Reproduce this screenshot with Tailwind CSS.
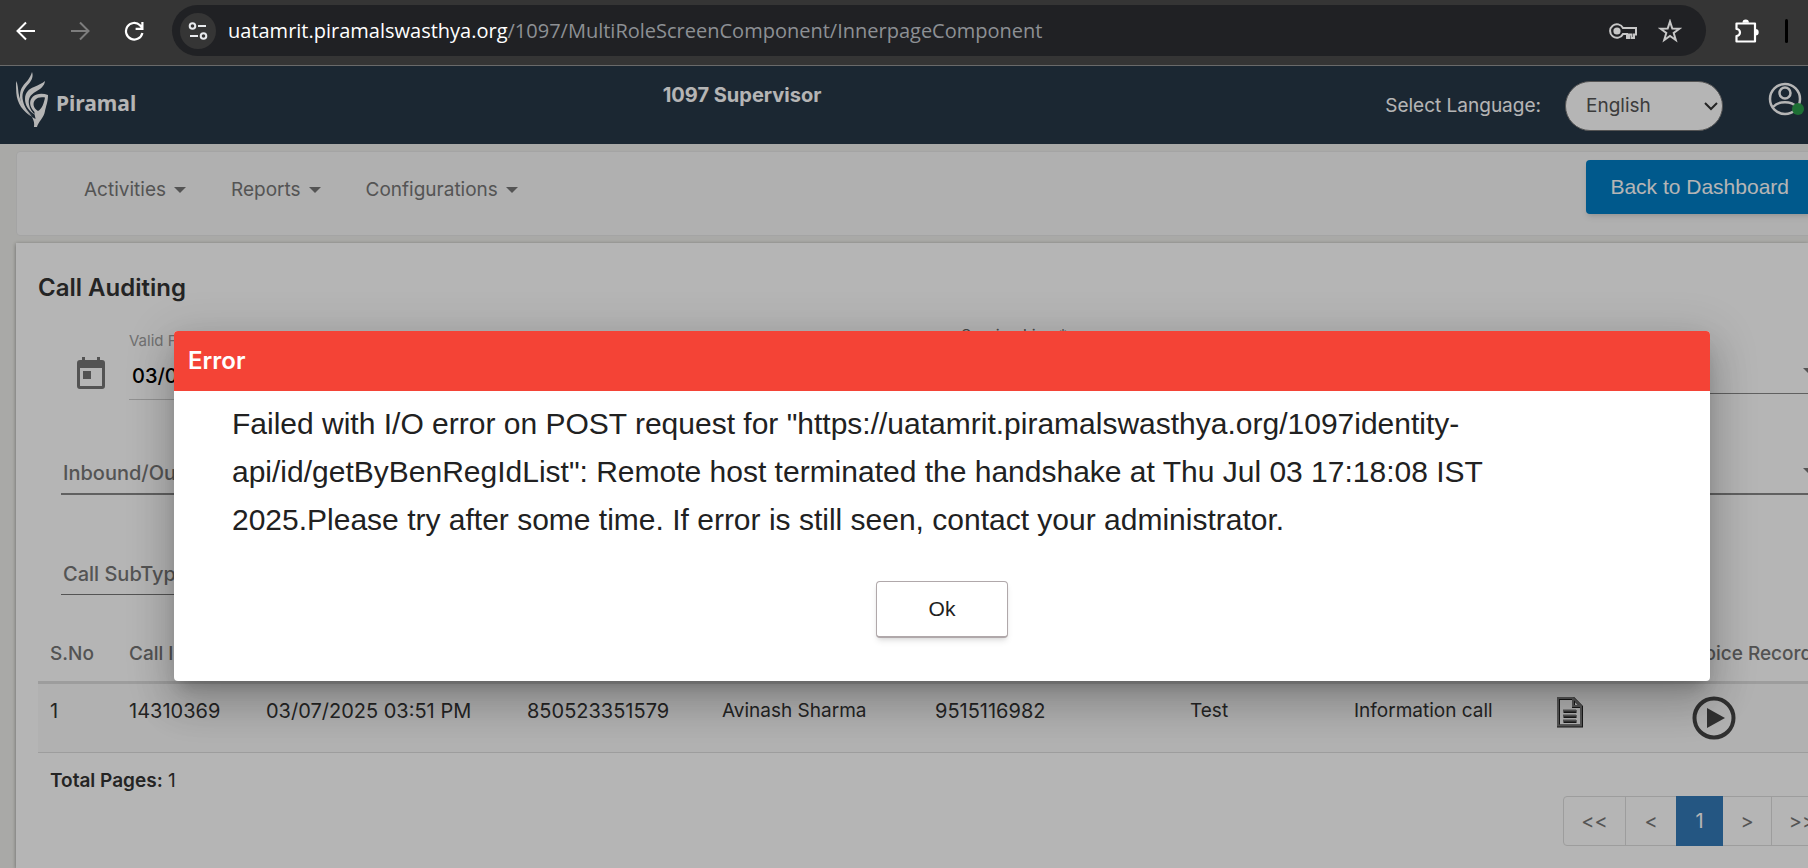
<!DOCTYPE html>
<html lang="en">
<head>
  <meta charset="UTF-8">
  <title>1097 Supervisor</title>
  <script src="https://cdn.jsdelivr.net/npm/@tailwindcss/browser@4"></script>
</head>
<body class="min-h-screen flex flex-col overflow-hidden bg-[#efefeb] font-['Inter',sans-serif] text-[19px] text-[#333]">

  <!-- browser toolbar -->
  <div class="flex items-center h-[66px] pb-1 pl-4 bg-[#353535] border-b border-[#6a6a6a] text-white">
    <button aria-label="Back" class="w-5 mr-[34px]">
      <svg class="w-5 h-5" viewBox="0 0 20 20" fill="none" stroke="#fff" stroke-width="2"><path d="M19 10H2M10 1.5 1.5 10l8.500 8.500"/></svg>
    </button>
    <button aria-label="Forward" class="w-5 mr-[34px]">
      <svg class="w-5 h-5" viewBox="0 0 20 20" fill="none" stroke="#7d7d7d" stroke-width="2"><path d="M1 10h17M10 1.500 18.500 10 10 18.500"/></svg>
    </button>
    <button aria-label="Reload" class="w-5 mr-7">
      <svg class="w-5 h-5" viewBox="0 0 20 20" fill="none" stroke="#fff" stroke-width="2.200"><path d="M18.400 12A8.300 8.300 0 1 1 16 4.200L18 6.500M18.400 1v6.800h-6.800"/></svg>
    </button>
    <div class="flex flex-1 items-center h-[51px] pl-2 pr-6 rounded-full bg-[#202124]">
      <button aria-label="Site information" class="flex items-center justify-center w-9 h-9 mr-3 rounded-full bg-[#353535]">
        <svg class="w-5 h-5" viewBox="0 0 20 20" fill="none" stroke="#e8eaed" stroke-width="2"><circle cx="4.500" cy="5" r="2.800"/><path d="M10 5h8M2 15h8"/><circle cx="15.500" cy="15" r="2.800"/></svg>
      </button>
      <p class="flex-1 font-['Open_Sans',sans-serif] text-xl text-[#8d9094]"><span class="text-white">uatamrit.piramalswasthya.org</span>/1097/MultiRoleScreenComponent/InnerpageComponent</p>
      <button aria-label="Passwords" class="mr-[21px]">
        <svg class="w-7 h-5" viewBox="0 0 28 20" fill="none" stroke="#c7c7c7" stroke-width="2"><path d="M14 7h13v6.500h-2V17h-2.500v-3.500H20V17h-2v-4h-4A6.800 6.800 0 1 1 14 7z"/><circle cx="8" cy="10" r="2.600" fill="#c7c7c7"/></svg>
      </button>
      <button aria-label="Bookmark">
        <svg class="w-6 h-6" viewBox="0 0 24 24" fill="none" stroke="#c7c7c7" stroke-width="2"><path d="m12 2.500 2.300 7 7.200.200-5.800 4.300 2.100 7L12 17l-5.800 4 2.100-7-5.800-4.300 7.200-.200z"/></svg>
      </button>
    </div>
    <button aria-label="Extensions" class="ml-[29px] mr-[26px]">
      <svg class="w-6 h-6" viewBox="0 0 24 24" fill="none" stroke="#fff" stroke-width="2.200" stroke-linejoin="round"><path d="M1.500 4.500h18.500V22.500H1.500v-5.500a3.500 3.500 0 0 0 0-7z"/><path d="M7.500 3.800a3.200 3.200 0 0 1 6.400 0zM20.500 10a3.200 3.200 0 0 1 0 6.400z" fill="#fff" stroke="none"/></svg>
    </button>
    <span class="w-[3px] h-6 mr-5 rounded-full bg-black"></span>
  </div>

  <div class="relative flex flex-col flex-1">

    <!-- header -->
    <header class="grid grid-cols-[1fr_346px_1fr] h-[78px] pr-1 bg-[#273747] text-white">
      <div class="flex items-start pt-[6px] pl-4 gap-2">
        <svg class="w-8 h-[55px]" viewBox="0 0 32 55" fill="#fff">
          <path d="M0 9c2 3 2 8 2.500 12 1.500 9 6 17 14 24C7 40 1 31 .300 21 0 17 0 13 0 9z"/>
          <path d="M16 0c1.500 4 0 8-3 11.500C7 18 5.500 22 7 29c1.500 6 4.500 11 10 15C8 39 3.500 31 4 23c.500-8 4-10 8-15 1.800-2.500 3-5 4-8z"/>
          <path d="M29 9c-.500 5-4.500 8-9 10.500-6 3.500-8 7-7 13 .700 4 3 7.500 6.500 10.500C12.500 39 9 33 9 27c.200-7 4-10 9-12 5-2.200 8-3.500 11-6z"/>
          <path fill-rule="evenodd" d="M32 23c-5-2-11-2-15 1.500-4.500 4.500-3.500 10.500 1.500 15.500-.500 2 1 5 1 7l-3.500-2c2 4 2.500 6 2 10h3c1-5 7-9 8-16 1-5 3-9 3-16zM29 25.500c-1 5-2.500 11-7 13.500-5-3-5.500-8-3-11 2.500-2.800 6-3 10-2.500z"/>
        </svg>
        <span class="pt-[15px] font-['Noto_Sans',sans-serif] font-bold text-[21px] leading-8">Piramal</span>
      </div>
      <h1 class="-ml-80 pt-[13px] text-center font-bold text-xl leading-8">1097 Supervisor</h1>
      <div class="flex justify-end">
        <label for="lang" class="mt-6 mr-6 leading-8">Select Language:</label>
        <div class="relative mt-[15px] mr-[45px]">
          <select id="lang" class="appearance-none w-[158px] h-[50px] pl-5 rounded-full bg-white border border-[#777] text-[#555]"><option>English</option></select>
          <svg class="absolute right-1 top-5 w-4 h-3" viewBox="0 0 16 12" fill="none" stroke="#333" stroke-width="2"><path d="m2 2 6 6 6-6"/></svg>
        </div>
        <button aria-label="Profile" class="mt-4 self-start">
          <svg class="w-9 h-9" viewBox="0 0 36 36" fill="none" stroke="#fff" stroke-width="2.500"><circle cx="17" cy="17" r="15"/><circle cx="17" cy="11" r="5.500"/><path d="M5 25c6-6.500 18-6.500 24 0"/><circle cx="30" cy="27" r="6" fill="#2a9d4a" stroke="none"/></svg>
        </button>
      </div>
    </header>

    <!-- menu bar -->
    <nav class="flex items-start justify-between h-[85px] mt-[7px] ml-4 -mr-1.5 pl-[67px] bg-[#f8f8f8] border border-[#e7e7e7] rounded text-[#777]">
      <div class="flex gap-[45px] pt-[22px] leading-8">
        <a href="#" class="flex items-center gap-2">Activities <svg class="w-3 h-1.5" viewBox="0 0 12 6" fill="#777"><path d="M0 0h12L6 6z"/></svg></a>
        <a href="#" class="flex items-center gap-2">Reports <svg class="w-3 h-1.5" viewBox="0 0 12 6" fill="#777"><path d="M0 0h12L6 6z"/></svg></a>
        <a href="#" class="flex items-center gap-2">Configurations <svg class="w-3 h-1.5" viewBox="0 0 12 6" fill="#777"><path d="M0 0h12L6 6z"/></svg></a>
      </div>
      <button class="mt-2 h-[54px] px-6 rounded-sm bg-[#007ec5] text-white font-['Liberation_Sans',sans-serif] text-[21px] whitespace-nowrap shadow-md">Back to Dashboard</button>
    </nav>

    <!-- call auditing -->
    <main class="flex-1 mt-[7px] ml-4 pl-[22px] pt-[27px] bg-white shadow-[0_1px_4px_rgba(0,0,0,0.4)]">
      <h2 class="font-semibold text-2xl leading-9">Call Auditing</h2>

      <form class="-mr-6 pl-[23px]">
        <div class="flex mt-[19px] h-[131px]">
          <button type="button" aria-label="Open calendar" class="self-start mt-8 ml-4">
            <svg class="w-7 h-8" viewBox="0 0 28 32" fill="#757575"><path fill-rule="evenodd" d="M5 0h3v3h12V0h3v3h2a3 3 0 0 1 3 3v23a3 3 0 0 1-3 3H3a3 3 0 0 1-3-3V6a3 3 0 0 1 3-3h2zM3 11v18h22V11z"/><path d="M6 14h8v8H6z"/></svg>
          </button>
          <div class="mt-1.5 ml-6">
            <label for="from" class="block text-[15px] leading-5 text-[#9e9e9e]">Valid From</label>
            <input id="from" value="03/07/2025" class="w-[220px] mt-2.5 pl-[3px] h-[39px] pb-2 border-b border-[#ccc] font-medium text-xl text-black">
          </div>
          <div class="ml-[612px] w-[220px]">
            <label for="service" class="block text-base leading-5 text-[#666]">Service Line *</label>
          </div>
          <div class="relative flex-1 self-start mt-[31px]">
            <select id="service" class="appearance-none block w-full h-[38px] border-b border-[#888]"></select>
            <svg class="absolute right-[17px] top-3 w-3 h-1.5" viewBox="0 0 12 6" fill="#777"><path d="M0 0h12L6 6z"/></svg>
          </div>
        </div>
        <div class="flex justify-between h-[101px] font-medium text-xl text-[#777]">
          <select aria-label="Inbound/Outbound" class="appearance-none self-start w-[400px] h-[39px] pb-1 pl-0.5 border-b-2 border-[#888]"><option>Inbound/Outbound</option></select>
          <div class="relative w-[400px]">
            <select aria-label="Call Type" class="appearance-none block w-full h-[39px] border-b-2 border-[#888]"></select>
            <svg class="absolute right-[17px] top-3 w-3 h-1.5" viewBox="0 0 12 6" fill="#777"><path d="M0 0h12L6 6z"/></svg>
          </div>
        </div>
        <select aria-label="Call SubType" class="appearance-none block w-[400px] h-[38px] pb-1 pl-0.5 border-b border-[#777] font-medium text-xl text-[#777]"><option>Call SubType</option></select>
      </form>

      <table class="table-fixed w-full mt-8 text-left whitespace-nowrap">
        <colgroup>
          <col class="w-[79px]"><col class="w-[137px]"><col class="w-[261px]"><col class="w-[195px]"><col class="w-[213px]"><col class="w-[255px]"><col class="w-[164px]"><col class="w-[202px]"><col class="w-[136px]"><col>
        </colgroup>
        <thead class="h-[55px] border-b-3 border-[#ddd] text-[#757575]">
          <tr>
            <th class="pl-3 font-medium">S.No</th>
            <th class="pl-3 font-medium">Call ID</th>
            <th></th><th></th><th></th><th></th><th></th><th></th><th></th>
            <th class="pl-3 font-medium">Voice Recording</th>
          </tr>
        </thead>
        <tbody>
          <tr class="h-[70px] align-top bg-[#f9f9f9] border-b border-[#ddd] leading-6">
            <td class="pl-3 pt-[15px] text-xl leading-6">1</td>
            <td class="pl-3 pt-[15px] text-xl leading-6">14310369</td>
            <td class="pl-3 pt-[15px] text-xl leading-6">03/07/2025 03:51 PM</td>
            <td class="pl-3 pt-[15px] text-xl leading-6">850523351579</td>
            <td class="pl-3 pt-[15px]">Avinash Sharma</td>
            <td class="pl-3 pt-[15px] text-xl leading-6">9515116982</td>
            <td class="pl-3 pt-[15px]">Test</td>
            <td class="pl-3 pt-[15px]">Information call</td>
            <td class="pl-3 pt-3">
              <button aria-label="Case sheet"><svg class="w-7 h-8" viewBox="0 0 28 32" fill="none"><path d="M2.500 2.500h15l8 8v19.500h-23zM17.500 2.500v8h8M7.500 15.500h13M7.500 20.500h13M7.500 25.500h13" stroke="#222" stroke-width="3"/><path d="M2 2h15l8 8v19.500H2zM17 2v8h8M7 14.500h13M7 19.500h13M7 24.500h13" stroke="#777" stroke-width="2"/></svg></button>
            </td>
            <td class="pl-3 pt-3">
              <button aria-label="Play recording"><svg class="w-11 h-11" viewBox="0 0 44 44"><circle cx="22" cy="22" r="19.500" fill="none" stroke="#444" stroke-width="4"/><path d="M15 12v20l18-10z" fill="#444"/></svg></button>
            </td>
          </tr>
        </tbody>
      </table>

      <p class="mt-4 pl-3 leading-6"><b class="font-semibold">Total Pages:</b> 1</p>

      <div class="flex w-max ml-auto -mr-[25px] mt-[3px] h-[50px] border border-[#ddd] rounded bg-white text-xl text-[#777]">
        <button class="w-[62px] border-r border-[#ddd]">&lt;&lt;</button>
        <button class="w-[50px]">&lt;</button>
        <button class="w-[47px] -my-px bg-[#337ab7] text-white">1</button>
        <button class="w-[49px] border-r border-[#ddd]">&gt;</button>
        <button class="w-[60px]">&gt;&gt;</button>
      </div>
    </main>

    <!-- error dialog -->
    <div class="absolute inset-0 pt-[265px] pl-[174px] pr-[98px] bg-black/29">
      <div role="dialog" aria-labelledby="err" class="h-[350px] rounded-sm overflow-hidden bg-white shadow-[0_11px_15px_-7px_rgba(0,0,0,0.2),0_24px_38px_3px_rgba(0,0,0,0.14),0_9px_46px_8px_rgba(0,0,0,0.12)]">
        <h2 id="err" class="pl-3.5 bg-[#f44336] text-white font-semibold text-2xl leading-[60px]">Error</h2>
        <p class="pl-[58px] pr-[200px] pt-[9px] font-['Liberation_Sans',sans-serif] text-[30px] leading-12 text-[#212121]">Failed with I/O error on POST request for "https://uatamrit.piramalswasthya.org/1097identity-api/id/getByBenRegIdList": Remote host terminated the handshake at Thu Jul 03 17:18:08 IST 2025.Please try after some time. If error is still seen, contact your administrator.</p>
        <div class="flex justify-center mt-[37px]">
          <button class="w-[132px] h-[57px] rounded-sm border border-b-2 border-[#b0a8aa] bg-white text-[#212121] font-['Liberation_Sans',sans-serif] text-[21px] shadow-md">Ok</button>
        </div>
      </div>
    </div>
  </div>
</body>
</html>
